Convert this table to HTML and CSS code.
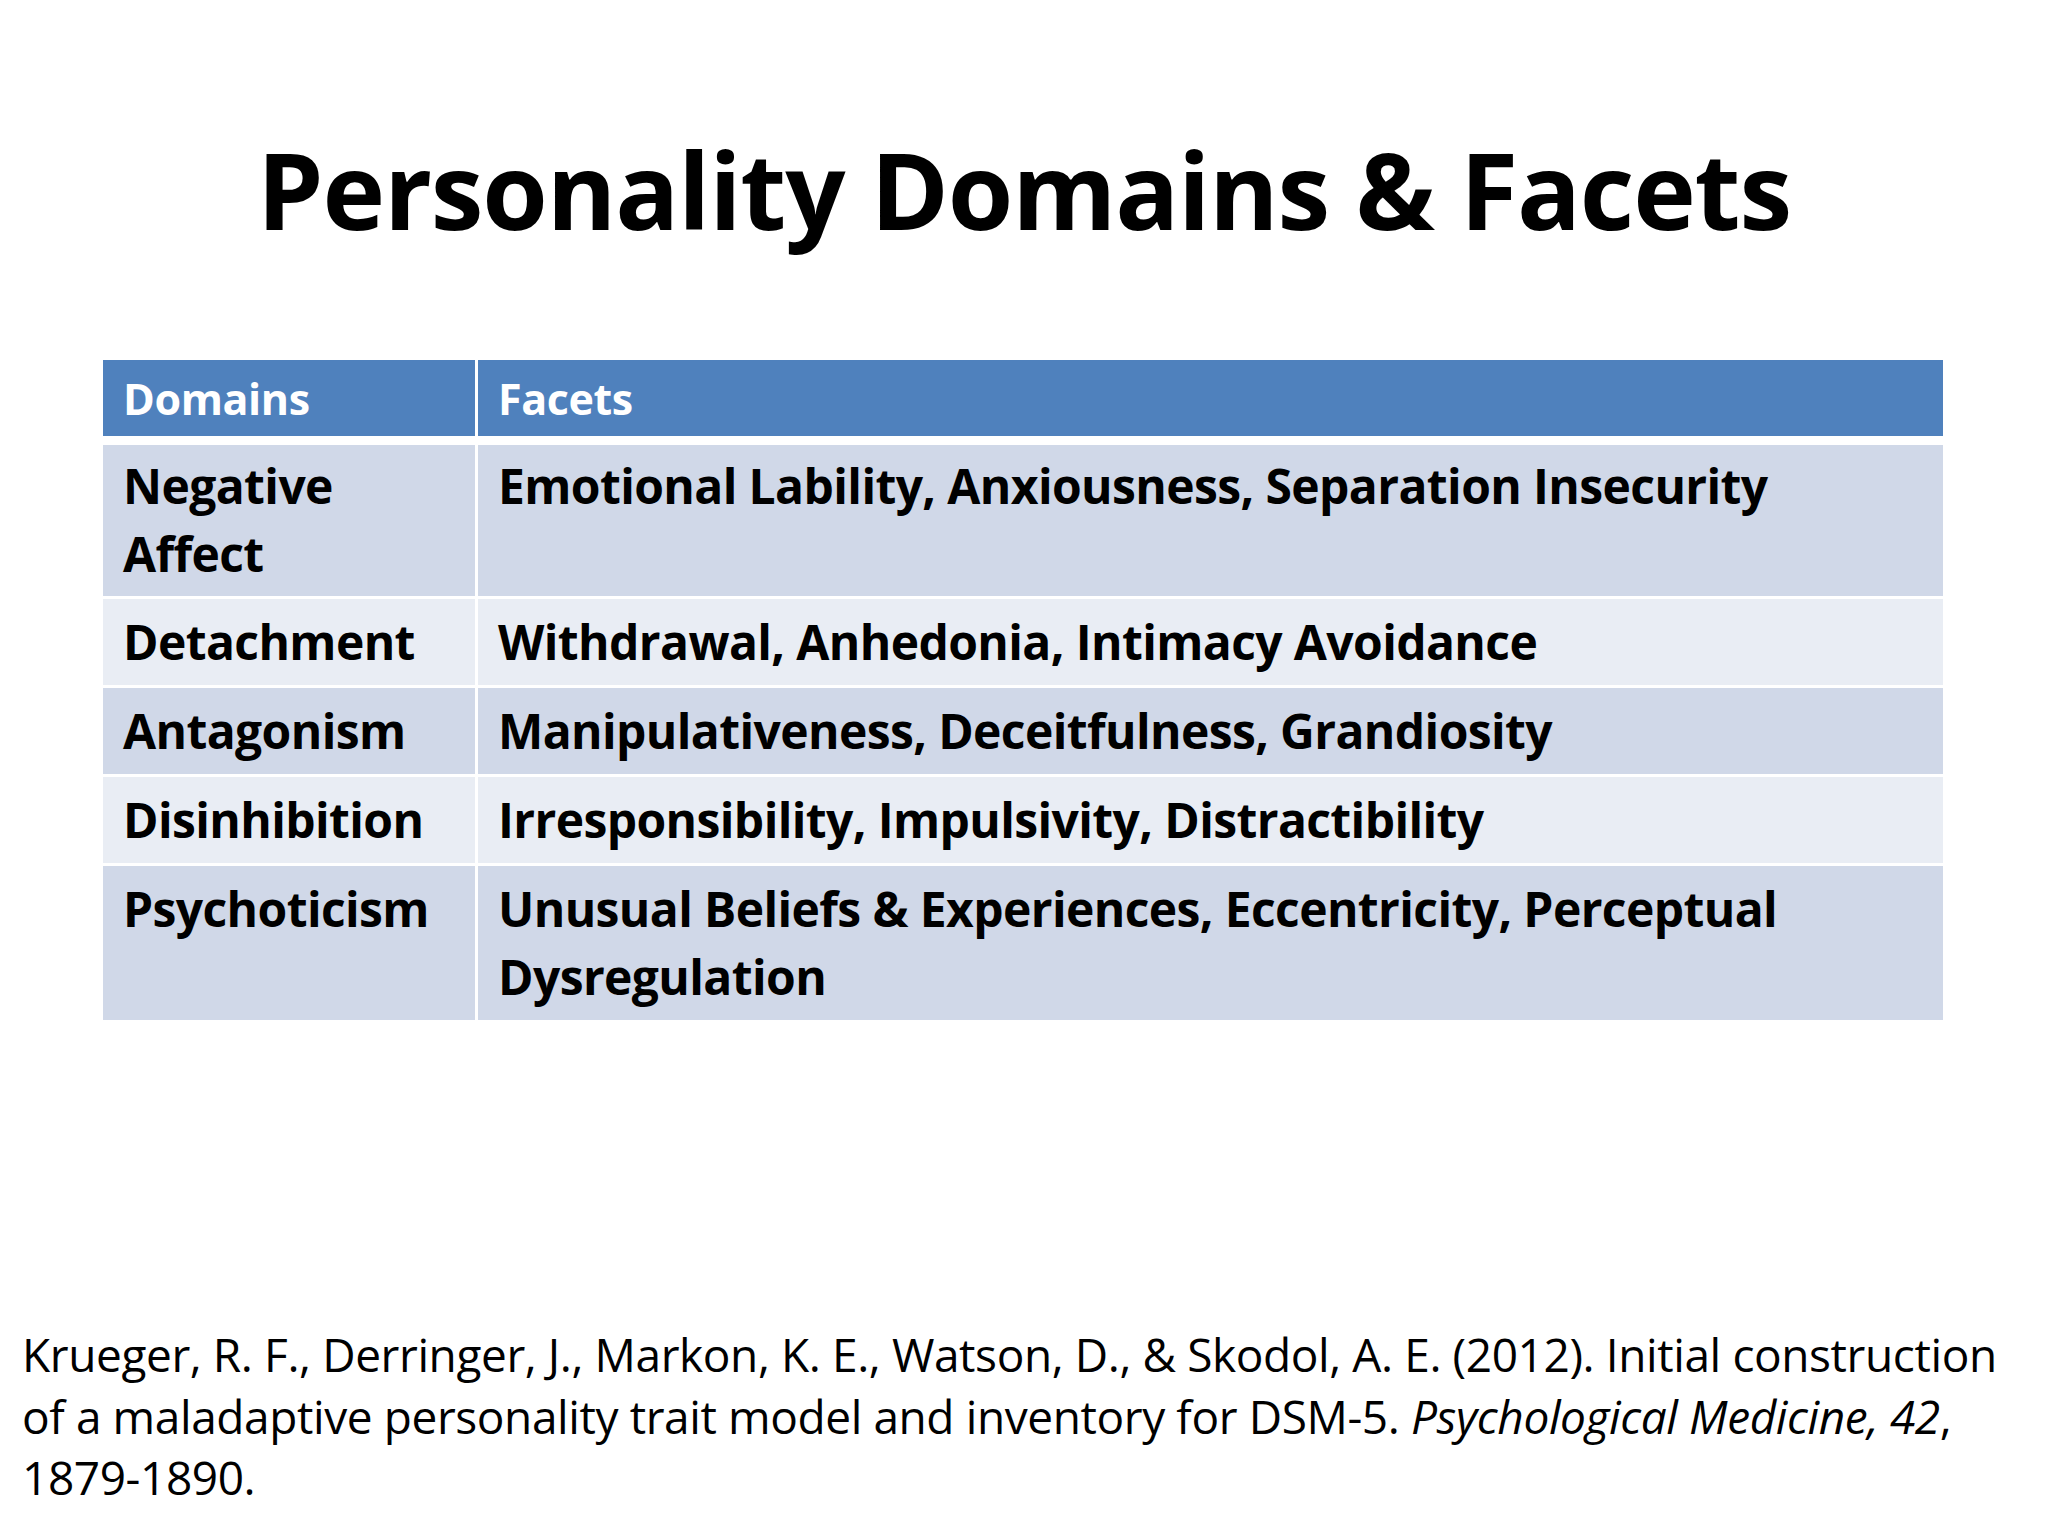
FILE: index.html
```html
<!DOCTYPE html>
<html lang="en">
<head>
<meta charset="utf-8">
<title>Personality Domains &amp; Facets</title>
<link rel="stylesheet" href="styles.css">
</head>
<body>
<main class="slide">
  <h1 class="title">Personality Domains &amp; Facets</h1>
  <table class="traits">
    <thead>
      <tr><th class="col-domain">Domains</th><th class="col-facet">Facets</th></tr>
    </thead>
    <tbody>
      <tr class="odd first"><td class="col-domain">Negative Affect</td><td class="col-facet">Emotional Lability, Anxiousness, Separation Insecurity</td></tr>
      <tr class="even"><td class="col-domain">Detachment</td><td class="col-facet">Withdrawal, Anhedonia, Intimacy Avoidance</td></tr>
      <tr class="odd"><td class="col-domain">Antagonism</td><td class="col-facet">Manipulativeness, Deceitfulness, Grandiosity</td></tr>
      <tr class="even"><td class="col-domain">Disinhibition</td><td class="col-facet">Irresponsibility, Impulsivity, Distractibility</td></tr>
      <tr class="odd last"><td class="col-domain">Psychoticism</td><td class="col-facet">Unusual Beliefs &amp; Experiences, Eccentricity, Perceptual Dysregulation</td></tr>
    </tbody>
  </table>
  <p class="citation">Krueger, R. F., Derringer, J., Markon, K. E., Watson, D., &amp; Skodol, A. E. (2012). Initial construction<br>of a maladaptive personality trait model and inventory for DSM-5. <em>Psychological Medicine, 42</em>,<br>1879-1890.</p>
</main>
</body>
</html>
```

FILE: styles.css
```css
html, body {
  margin: 0;
  padding: 0;
  background: #ffffff;
}

.slide {
  width: 2048px;
  height: 1536px;
  box-sizing: border-box;
  display: flex;
  flex-direction: column;
  align-items: stretch;
  padding: 126px 0 27px 0;
  font-family: "Open Sans", "Noto Sans", "Liberation Sans", sans-serif;
  color: #000000;
  background: #ffffff;
}

.title {
  margin: 0;
  text-align: center;
  font-size: 106px;
  line-height: 127px;
  font-weight: 700;
  letter-spacing: -1.2px;
  color: #000000;
}

.traits {
  margin: 107px 105px 0 103px;
  width: 1840px;
  border-collapse: separate;
  border-spacing: 0;
  table-layout: fixed;
}

.traits .col-domain {
  box-sizing: border-box;
  width: 375px;
  border-right: 3px solid #ffffff;
}

.traits th {
  background: #4f81bd;
  color: #ffffff;
  text-align: left;
  vertical-align: top;
  font-size: 43px;
  line-height: 61px;
  font-weight: 700;
  letter-spacing: -0.4px;
  padding: 8px 20px 7px 20px;
  border-bottom: 9px solid #ffffff;
}

.traits td {
  text-align: left;
  vertical-align: top;
  font-size: 48px;
  line-height: 68px;
  font-weight: 700;
  letter-spacing: -0.6px;
  padding: 9px 20px 9px 20px;
  border-bottom: 3px solid #ffffff;
}

.traits tr.first td {
  padding-top: 7px;
  padding-bottom: 8px;
}

.traits tr.last td {
  border-bottom: 0;
}

.traits tr.odd td {
  background: #d0d8e8;
}

.traits tr.even td {
  background: #e9edf4;
}

.citation {
  margin: auto 0 0 0;
  padding: 0 0 0 22px;
  font-size: 46px;
  line-height: 61.7px;
  font-weight: 400;
  letter-spacing: -0.4px;
  white-space: nowrap;
  color: #000000;
}

.citation em {
  font-style: italic;
}
```
